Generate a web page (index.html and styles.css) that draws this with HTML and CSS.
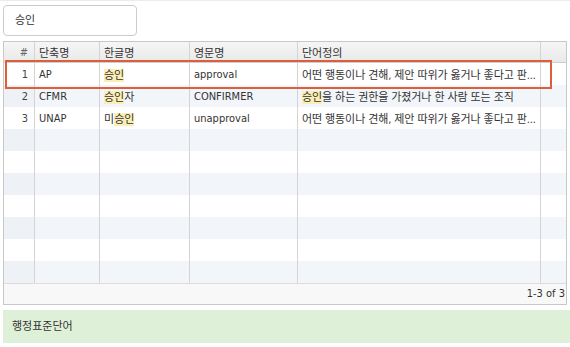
FILE: index.html
```html
<!DOCTYPE html>
<html lang="ko">
<head>
<meta charset="utf-8">
<link rel="stylesheet" href="styles.css">
</head>
<body>
<div class="page">
  <div class="search">승인</div>
  <div class="grid">
    <table class="table">
      <colgroup>
        <col class="c-num"><col class="c-abbr"><col class="c-kor"><col class="c-eng"><col class="c-def"><col class="c-pad">
      </colgroup>
      <thead>
        <tr><th class="num">#</th><th>단축명</th><th>한글명</th><th>영문명</th><th>단어정의</th><th class="pad"></th></tr>
      </thead>
      <tbody>
        <tr><td class="num">1</td><td>AP</td><td><mark>승인</mark></td><td>approval</td><td class="def">어떤 행동이나 견해, 제안 따위가 옳거나 좋다고 판...</td><td class="pad"></td></tr>
        <tr><td class="num">2</td><td>CFMR</td><td><mark>승인</mark>자</td><td>CONFIRMER</td><td class="def"><mark>승인</mark>을 하는 권한을 가졌거나 한 사람 또는 조직</td><td class="pad"></td></tr>
        <tr><td class="num">3</td><td>UNAP</td><td>미<mark>승인</mark></td><td>unapproval</td><td class="def">어떤 행동이나 견해, 제안 따위가 옳거나 좋다고 판...</td><td class="pad"></td></tr>
        <tr><td class="num"></td><td></td><td></td><td></td><td></td><td class="pad"></td></tr>
        <tr><td class="num"></td><td></td><td></td><td></td><td></td><td class="pad"></td></tr>
        <tr><td class="num"></td><td></td><td></td><td></td><td></td><td class="pad"></td></tr>
        <tr><td class="num"></td><td></td><td></td><td></td><td></td><td class="pad"></td></tr>
        <tr><td class="num"></td><td></td><td></td><td></td><td></td><td class="pad"></td></tr>
        <tr><td class="num"></td><td></td><td></td><td></td><td></td><td class="pad"></td></tr>
        <tr><td class="num"></td><td></td><td></td><td></td><td></td><td class="pad"></td></tr>
      </tbody>
    </table>
    <div class="pager">1-3 of 3</div>
    <div class="highlight"></div>
  </div>
  <div class="notice">행정표준단어</div>
</div>
</body>
</html>
```

FILE: styles.css
```css
html, body {
  margin: 0;
  padding: 0;
  background: #ffffff;
}
body {
  font-family: "DejaVu Sans Condensed", "Liberation Sans", "Noto Sans CJK KR", sans-serif;
  font-size: 11px;
  color: #333333;
  border-top: 1px solid #ececec;
  width: 570px;
  height: 346px;
  overflow: hidden;
}
.page {
  padding: 4px 0 0 3px;
  display: flex;
  flex-direction: column;
}
.search {
  box-sizing: border-box;
  width: 134px;
  height: 31px;
  border: 1px solid #cccccc;
  border-radius: 4px;
  padding-left: 11px;
  line-height: 29px;
  font-size: 11px;
}
.grid {
  position: relative;
  box-sizing: border-box;
  width: 564px;
  margin-top: 5px;
  border: 1px solid #c8c8c8;
}
.table {
  width: 100%;
  border-collapse: separate;
  border-spacing: 0;
  table-layout: fixed;
}
.c-num { width: 31px; }
.c-abbr { width: 65px; }
.c-kor { width: 90px; }
.c-eng { width: 108px; }
.c-def { width: 243px; }
.c-pad { width: 25px; }
th, td {
  box-sizing: border-box;
  padding: 0 4px;
  border-right: 1px solid #d4d4d4;
  white-space: nowrap;
  overflow: hidden;
  text-align: left;
  font-weight: normal;
}
td.def {
  padding-right: 0;
  letter-spacing: -0.1px;
}
th {
  height: 21px;
  background: linear-gradient(#f6f6f6, #e9e9e9);
  border-bottom: 1px solid #cfcfcf;
}
td {
  height: 22px;
}
th.pad, td.pad {
  border-right: none;
}
.num {
  text-align: right;
  padding-right: 6px;
  color: #444444;
}
th.num {
  color: #666666;
}
tbody tr:nth-child(even) td {
  background: #f2f5fa;
}
tbody tr:nth-child(even) td.num {
  background: #eef1f5;
}
mark {
  background: #fcefb6;
  color: inherit;
}
.pager {
  height: 21px;
  box-sizing: border-box;
  border-top: 1px solid #dcdcdc;
  background: #f8f8f8;
  text-align: right;
  padding-right: 1px;
  line-height: 20px;
}
.highlight {
  position: absolute;
  left: 1px;
  top: 18px;
  width: 547px;
  height: 29px;
  box-sizing: border-box;
  border: 2px solid #dc5f3c;
  pointer-events: none;
}
.notice {
  margin-top: 5px;
  height: 33px;
  background: #dff0d8;
  padding-left: 9px;
  line-height: 33px;
  color: #333333;
}
```
